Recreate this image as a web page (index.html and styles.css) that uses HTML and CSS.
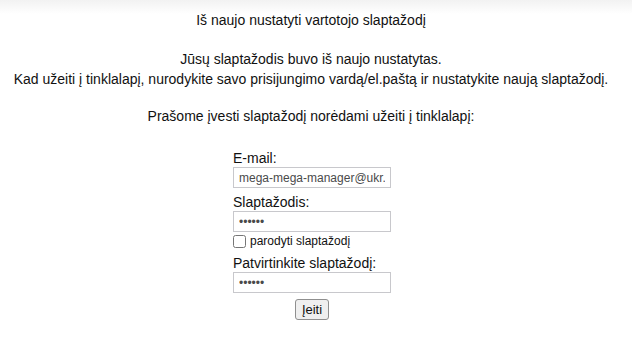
FILE: index.html
```html
<!DOCTYPE html>
<html>
<head>
<meta charset="utf-8">
<link rel="stylesheet" href="styles.css">
</head>
<body>
<div class="page">
  <p class="title">Iš naujo nustatyti vartotojo slaptažodį</p>
  <p class="msg">Jūsų slaptažodis buvo iš naujo nustatytas.<br>Kad užeiti į tinklalapį, nurodykite savo prisijungimo vardą/el.paštą ir nustatykite naują slaptažodį.</p>
  <p class="prompt">Prašome įvesti slaptažodį norėdami užeiti į tinklalapį:</p>
  <form class="form">
    <label class="lbl">E-mail:</label>
    <input class="inp" type="text" value="mega-mega-manager@ukr.net">
    <label class="lbl">Slaptažodis:</label>
    <input class="inp pw" type="password" value="123456">
    <label class="chk"><input type="checkbox" class="cb"><span>parodyti slaptažodį</span></label>
    <label class="lbl">Patvirtinkite slaptažodį:</label>
    <input class="inp pw" type="password" value="123456">
    <div class="actions"><button type="button" class="btn">Įeiti</button></div>
  </form>
</div>
</body>
</html>
```

FILE: styles.css
```css
html, body {
  margin: 0;
  padding: 0;
}
body {
  background: linear-gradient(#f2f2f2 0px, #ffffff 14px) no-repeat;
  font-family: "Liberation Sans", Arial, sans-serif;
  font-size: 14px;
  color: #111;
}
.page {
  text-align: center;
  padding: 10px 10px 0 0;
}
.title, .msg, .prompt {
  margin: 0;
  line-height: 20px;
}
.msg { margin-top: 19px; }
.prompt { margin-top: 17px; }
.form {
  width: 158px;
  margin: 24px 0 0 calc(50% - 78px);
  text-align: left;
  display: flex;
  flex-direction: column;
}
.lbl {
  font-size: 14px;
  line-height: 16px;
  color: #111;
}
.lbl.last { margin-top: 1px; }
.inp {
  box-sizing: border-box;
  width: 158px;
  height: 21px;
  margin: 1px 0 6px 0;
  border: 1px solid #c8c8cc;
  padding: 0 5px;
  font-family: "Liberation Sans", Arial, sans-serif;
  font-size: 12px;
  color: #4a4a4a;
  background: #fff;
}
.chk {
  display: flex;
  align-items: center;
  gap: 4px;
  font-size: 12px;
  line-height: 14px;
  margin: -4px 0 7px;
}
.cb { margin: 0; width: 13px; height: 13px; }
.actions {
  width: 158px;
  text-align: center;
}
.btn {
  box-sizing: border-box;
  height: 21px;
  font-family: "Liberation Sans", Arial, sans-serif;
  font-size: 13px;
  line-height: 16px;
  padding: 0 6px;
  border: 1px solid #8f8f8f;
  border-radius: 3px;
  background: #efefef;
  color: #111;
}
```
